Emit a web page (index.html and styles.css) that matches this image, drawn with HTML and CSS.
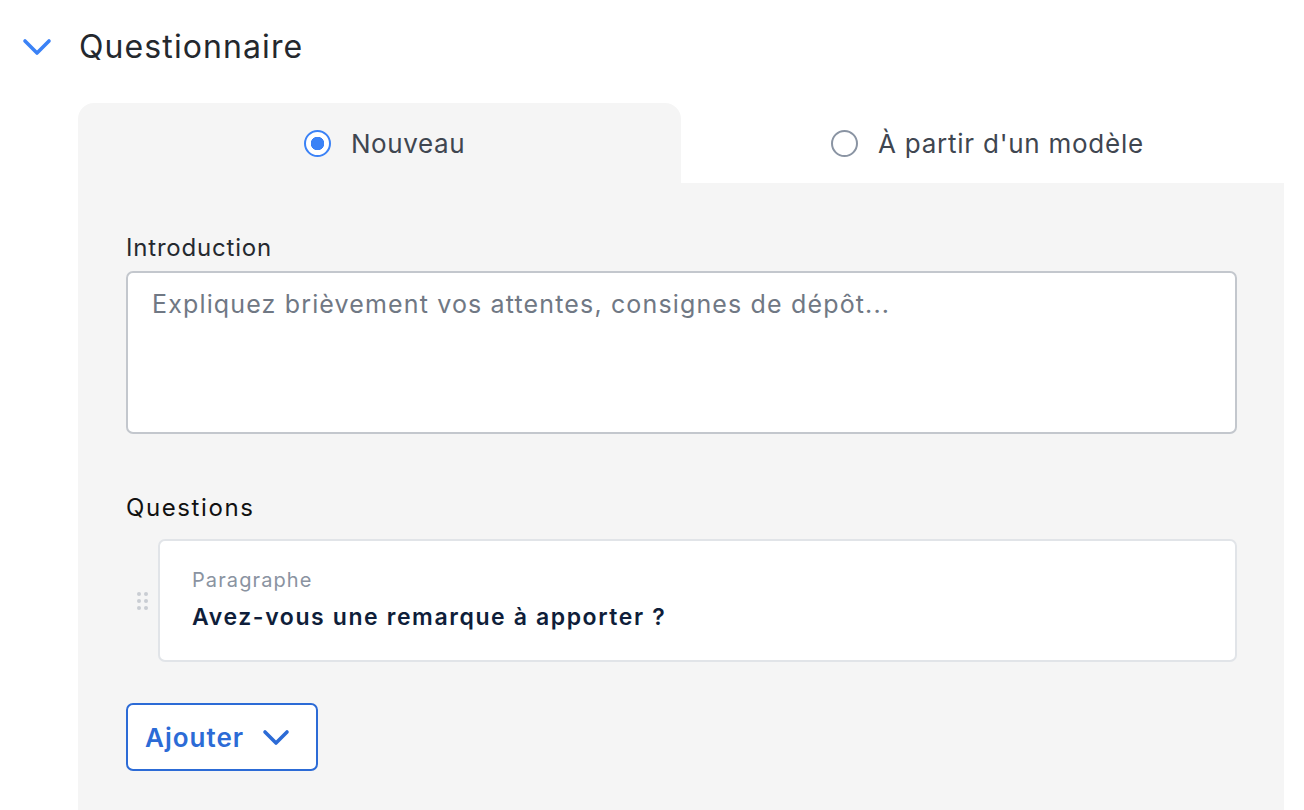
FILE: index.html
```html
<!DOCTYPE html>
<html lang="fr">
<head>
<meta charset="UTF-8" />
<meta name="viewport" content="width=device-width, initial-scale=1" />
<title>Questionnaire</title>
<link rel="stylesheet" href="styles.css">
</head>
<body>
<section class="questionnaire">
  <header class="section-head">
    <svg class="toggle" width="30" height="18" viewBox="0 0 30 18" aria-hidden="true">
      <path d="M3 3 L15 15 L27 3" fill="none" stroke="#3b82f6" stroke-width="3.6" stroke-linecap="round" stroke-linejoin="round"/>
    </svg>
    <h2>Questionnaire</h2>
  </header>

  <div class="panel">
    <div class="tabs" role="radiogroup">
      <label class="tab active">
        <span class="radio checked"></span>
        <span class="tab-text">Nouveau</span>
      </label>
      <label class="tab">
        <span class="radio"></span>
        <span class="tab-text">À partir d'un modèle</span>
      </label>
    </div>

    <div class="panel-body">
      <label class="field-label intro-label" for="intro">Introduction</label>
      <textarea id="intro" class="intro" placeholder="Expliquez brièvement vos attentes, consignes de dépôt..."></textarea>

      <div class="field-label questions-label">Questions</div>
      <div class="question-row">
        <span class="handle" aria-hidden="true">
          <i></i><i></i><i></i><i></i><i></i><i></i>
        </span>
        <div class="question-card">
          <div class="q-type">Paragraphe</div>
          <div class="q-title">Avez-vous une remarque à apporter ?</div>
        </div>
      </div>

      <button class="add-btn" type="button">
        Ajouter
        <svg width="30" height="18" viewBox="0 0 30 18" aria-hidden="true">
          <path d="M4 4 L15 15 L26 4" fill="none" stroke="currentColor" stroke-width="3.6" stroke-linecap="round" stroke-linejoin="round"/>
        </svg>
      </button>
    </div>
  </div>
</section>
</body>
</html>
```

FILE: styles.css
```css
:root {
  --blue: #3b82f6;
  --btn-blue: #2c6bd6;
  --panel-bg: #f5f5f5;
  --text: #23272e;
  --font-family: Inter, 'Noto Sans', 'Liberation Sans', sans-serif;
}

*, *::before, *::after {
  box-sizing: border-box;
}

html, body {
  margin: 0;
  background: #fff;
  font-family: var(--font-family);
  color: var(--text);
  overflow: hidden;
}

/* Section header */
.section-head {
  display: flex;
  align-items: center;
  height: 103px;
  padding-left: 22px;
  padding-bottom: 10px;
}
.section-head .toggle {
  display: block;
  margin-right: 27px;
}
.section-head h2 {
  margin: 0;
  font-size: 32px;
  font-weight: 400;
  letter-spacing: 1.1px;
  color: #24282e;
}

/* Panel with tabs */
.panel {
  margin-left: 78px;
  width: 1206px;
}
.tabs {
  display: grid;
  grid-template-columns: 603px 603px;
  height: 80px;
}
.tab {
  display: flex;
  align-items: center;
  justify-content: center;
  gap: 20px;
  padding-left: 10px;
  font-size: 26px;
  color: #3f4650;
  cursor: pointer;
}
.tab-text {
  letter-spacing: 0.75px;
}
.tab.active {
  background: var(--panel-bg);
  border-radius: 16px 16px 0 0;
}
.tab.active .tab-text {
  letter-spacing: 0.6px;
}
.radio {
  width: 27px;
  height: 27px;
  border-radius: 50%;
  border: 2px solid #8a94a3;
  background: #fff;
  flex-shrink: 0;
}
.radio.checked {
  border: 2.5px solid var(--blue);
  background: radial-gradient(circle, var(--blue) 0 6.5px, #fff 7px);
}

.panel-body {
  background: var(--panel-bg);
  padding: 49px 47px 38px 48px;
  min-height: 640px;
}

.field-label {
  display: block;
  font-size: 24px;
  line-height: 32px;
  color: #25292f;
  margin-bottom: 7px;
}
.intro-label {
  letter-spacing: 0.8px;
}
.intro {
  display: block;
  width: 100%;
  height: 163px;
  resize: none;
  border: 2px solid #c3c7cd;
  border-radius: 7px;
  background: #fff;
  padding: 15px 24px;
  font-family: var(--font-family);
  font-size: 25px;
  line-height: 32px;
  letter-spacing: 1.15px;
  color: var(--text);
}
.intro::placeholder {
  color: #707884;
}
.questions-label {
  margin-top: 58px;
  margin-bottom: 15px;
  letter-spacing: 1.6px;
  color: #111;
}

/* Question list */
.question-row {
  display: flex;
  align-items: center;
}
.handle {
  width: 32px;
  display: grid;
  grid-template-columns: 4px 4px;
  gap: 3px;
  justify-content: center;
  align-content: center;
}
.handle i {
  width: 4px;
  height: 4px;
  border-radius: 50%;
  background: #c9cdd3;
}
.question-card {
  flex: 1;
  background: #fff;
  border: 2px solid #e1e4e8;
  border-radius: 7px;
  padding: 25px 32px 27px;
}
.q-type {
  font-size: 20px;
  line-height: 28px;
  letter-spacing: 1.1px;
  color: #8a93a1;
}
.q-title {
  margin-top: 7px;
  font-size: 23px;
  line-height: 32px;
  font-weight: 600;
  letter-spacing: 1.6px;
  color: #0f1e3a;
}

/* Add button */
.add-btn {
  display: flex;
  align-items: center;
  gap: 17px;
  margin-top: 41px;
  height: 68px;
  padding: 0 25px 0 17px;
  background: #fff;
  border: 2px solid var(--btn-blue);
  border-radius: 7px;
  font-family: var(--font-family);
  font-size: 26px;
  font-weight: 600;
  letter-spacing: 1px;
  color: var(--btn-blue);
  cursor: pointer;
}
.add-btn svg {
  display: block;
}
```
